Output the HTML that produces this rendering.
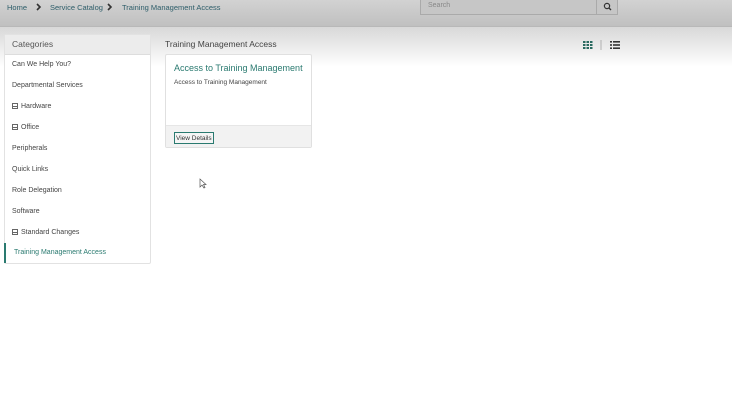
<!DOCTYPE html>
<html><head><style>
*{box-sizing:border-box;margin:0;padding:0}
body{width:732px;height:404px;overflow:hidden;background:#fff;font-family:"Liberation Sans",sans-serif;position:relative}
.top{position:absolute;left:0;top:0;width:732px;height:27px;background:linear-gradient(#d2d2d2,#c0c0c0);border-bottom:1px solid #b8b8b8}
.grad{position:absolute;left:0;top:27px;width:732px;height:40px;background:linear-gradient(#d8d8d8,#fff)}
.bc{position:absolute;top:3px;font-size:7.5px;color:#2e5e6a;white-space:nowrap}
.chev{position:absolute;top:3px}
.search{position:absolute;left:420px;top:0;width:198px;height:15px;border:1px solid #aaa;border-top:none;background:#c6c6c6}
.search span{position:absolute;left:7px;top:2px;font-size:7px;color:#888}
.search i{position:absolute;right:0;top:0;width:21px;height:14px;border-left:1px solid #aaa}
.side{position:absolute;left:4px;top:34px;width:147px;height:230px;background:#fff;border:1px solid #e2e2e2;border-radius:2px}
.side .h{height:20px;background:#ececec;border-bottom:1px solid #ddd;font-size:8.5px;color:#555;padding:4px 7px}
.it{position:absolute;left:8px;font-size:7px;color:#444;white-space:nowrap}
.bx{display:inline-block;width:6px;height:6px;border:1px solid #666;margin-right:3px;vertical-align:-1px;position:relative}
.bx:after{content:"";position:absolute;left:0;top:2px;width:4px;height:1px;background:#666}
.card{position:absolute;left:165px;top:54px;width:147px;height:94px;border:1px solid #e0e0e0;border-radius:2px;background:#fff;overflow:hidden}
.card .f{position:absolute;left:0;top:70px;width:100%;height:24px;background:#f2f2f2;border-top:1px solid #e6e6e6}
.btn{position:absolute;left:8px;top:6px;width:40px;height:12px;border:1px solid #2a7a70;font-size:6.5px;color:#333;padding:2px 0 0 1px;background:#f5f5f5;white-space:nowrap;overflow:hidden}
</style></head><body>
<div class="top"></div><div class="grad"></div>
<div class="bc" style="left:7px">Home</div>
<svg class="chev" style="left:36px" width="6" height="8"><path d="M1 1 L4 4 L1 7" fill="none" stroke="#333" stroke-width="1.6"/></svg>
<div class="bc" style="left:50px">Service Catalog</div>
<svg class="chev" style="left:107px" width="6" height="8"><path d="M1 1 L4 4 L1 7" fill="none" stroke="#333" stroke-width="1.6"/></svg>
<div class="bc" style="left:122px">Training Management Access</div>
<div class="search"><span>Search</span><i><svg width="21" height="14"><circle cx="10" cy="6" r="2.6" fill="none" stroke="#333" stroke-width="1.2"/><line x1="12" y1="8" x2="14" y2="10" stroke="#333" stroke-width="1.3"/></svg></i></div>
<div class="side"><div class="h">Categories</div></div>
<div class="it" style="top:61px;left:12px">Can We Help You?</div>
<div class="it" style="top:82px;left:12px">Departmental Services</div>
<div class="it" style="top:103px;left:12px"><span class="bx"></span>Hardware</div>
<div class="it" style="top:124px;left:12px"><span class="bx"></span>Office</div>
<div class="it" style="top:145px;left:12px">Peripherals</div>
<div class="it" style="top:166px;left:12px">Quick Links</div>
<div class="it" style="top:187px;left:12px">Role Delegation</div>
<div class="it" style="top:208px;left:12px">Software</div>
<div class="it" style="top:229px;left:12px"><span class="bx"></span>Standard Changes</div>
<div style="position:absolute;left:4px;top:243px;width:2px;height:20px;background:#2a7a70"></div>
<div class="it" style="top:249px;left:14px;color:#2a7a70">Training Management Access</div>
<div style="position:absolute;left:165px;top:39px;font-size:8.5px;color:#444">Training Management Access</div>
<svg style="position:absolute;left:583px;top:40px" width="40" height="10">
<g fill="#2a6a60"><rect x="0" y="1" width="2.5" height="2"/><rect x="3.5" y="1" width="2.5" height="2"/><rect x="7" y="1" width="2.5" height="2"/><rect x="0" y="4" width="2.5" height="2"/><rect x="3.5" y="4" width="2.5" height="2"/><rect x="7" y="4" width="2.5" height="2"/><rect x="0" y="7" width="2.5" height="2"/><rect x="3.5" y="7" width="2.5" height="2"/><rect x="7" y="7" width="2.5" height="2"/></g>
<line x1="18" y1="0" x2="18" y2="10" stroke="#999" stroke-width=".7"/>
<g fill="#333"><rect x="27" y="1" width="2" height="1.6"/><rect x="30" y="1" width="7" height="1.6"/><rect x="27" y="4.2" width="2" height="1.6"/><rect x="30" y="4.2" width="7" height="1.6"/><rect x="27" y="7.4" width="2" height="1.6"/><rect x="30" y="7.4" width="7" height="1.6"/></g></svg>
<div class="card">
<div style="position:absolute;left:8px;top:8px;font-size:9px;color:#2a7a70">Access to Training Management</div>
<div style="position:absolute;left:8px;top:24px;font-size:6.5px;color:#444">Access to Training Management</div>
<div class="f"><div class="btn">View Details</div></div>
</div>
<svg style="position:absolute;left:199px;top:178px" width="8" height="11"><path d="M1 1 L1 9 L3 7 L5 10 L6 9.5 L4.5 6.5 L7 6.5 Z" fill="#fff" stroke="#555" stroke-width=".7"/></svg>
</body></html>
